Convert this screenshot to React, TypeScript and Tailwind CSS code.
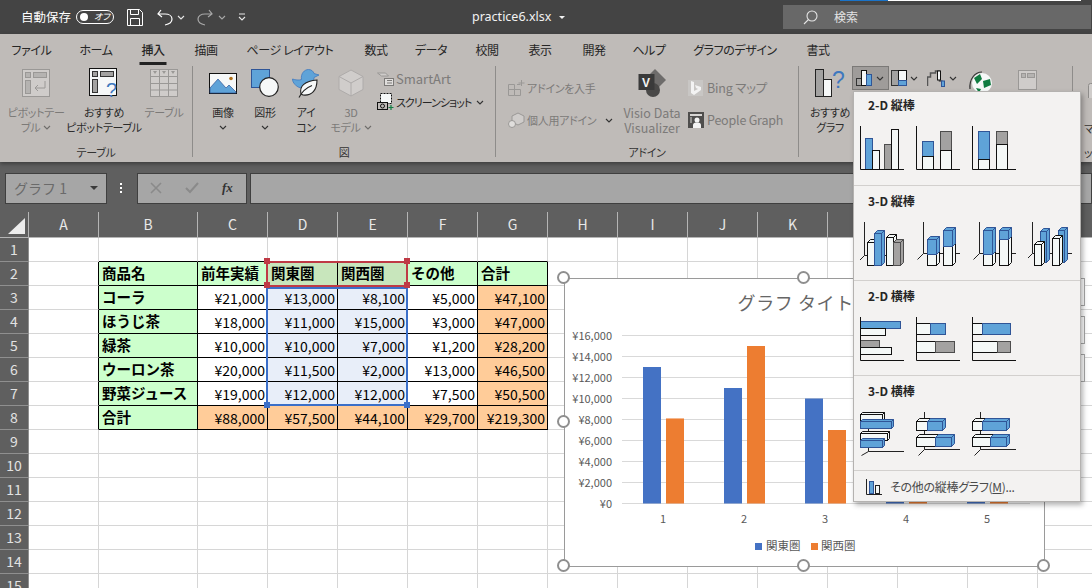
import type { ReactNode } from "react";

const palt = "[font-feature-settings:'palt']";

const columns = ["A", "B", "C", "D", "E", "F", "G", "H", "I", "J", "K", "L", "M", "N", "O"];
const rowNumbers = [1, 2, 3, 4, 5, 6, 7, 8, 9, 10, 11, 12, 13, 14, 15];

// Table contents, keyed by sheet row
const tableRows: Record<number, string[]> = {
  2: ["商品名", "前年実績", "関東圏", "関西圏", "その他", "合計"],
  3: ["コーラ", "¥21,000", "¥13,000", "¥8,100", "¥5,000", "¥47,100"],
  4: ["ほうじ茶", "¥18,000", "¥11,000", "¥15,000", "¥3,000", "¥47,000"],
  5: ["緑茶", "¥10,000", "¥10,000", "¥7,000", "¥1,200", "¥28,200"],
  6: ["ウーロン茶", "¥20,000", "¥11,500", "¥2,000", "¥13,000", "¥46,500"],
  7: ["野菜ジュース", "¥19,000", "¥12,000", "¥12,000", "¥7,500", "¥50,500"],
  8: ["合計", "¥88,000", "¥57,500", "¥44,100", "¥29,700", "¥219,300"],
};

const tabs = [
  { label: "ファイル", className: "w-[63px]" },
  { label: "ホーム", className: "w-[66px]" },
  { label: "挿入", className: "w-[48px]", active: true },
  { label: "描画", className: "w-[58px]" },
  { label: "ページ レイアウト", className: "w-[110px]" },
  { label: "数式", className: "w-[62px]" },
  { label: "データ", className: "w-[48px]" },
  { label: "校閲", className: "w-[64px]" },
  { label: "表示", className: "w-[42px]" },
  { label: "開発", className: "w-[66px]" },
  { label: "ヘルプ", className: "w-[44px]" },
  { label: "グラフのデザイン", className: "w-[128px]" },
  { label: "書式", className: "w-[38px]" },
];

const BLUE = { fill: "#5fa3d8", stroke: "#2f5597" };
const WHITE = { fill: "#f4f8f7", stroke: "#111111" };
const GRAY = { fill: "#a3a2a1", stroke: "#4d4d4d" };
type Tone = typeof BLUE;

function Chevron({ light = false }: { light?: boolean }) {
  return (
    <svg width="8" height="5" viewBox="0 0 8 5" className="shrink-0">
      <path d="M1 1l3 3 3-3" fill="none" stroke={light ? "#6f6d6b" : "#333333"} strokeWidth="1.1" />
    </svg>
  );
}

function Flat({ x, y, w, h, tone }: { x: number; y: number; w: number; h: number; tone: Tone }) {
  return <rect x={x} y={y} width={w} height={h} fill={tone.fill} stroke={tone.stroke} strokeWidth="1" />;
}

// Box with a top and a right face, as in the 3-D thumbnails
function Box({ x, y, w, h, tone, d = 3 }: { x: number; y: number; w: number; h: number; tone: Tone; d?: number }) {
  return (
    <g stroke={tone.stroke} strokeWidth="1" fill={tone.fill}>
      <path d={`M${x} ${y}l${d} ${-d}h${w}l${-d} ${d}z`} />
      <path d={`M${x + w} ${y}l${d} ${-d}v${h}l${-d} ${d}z`} />
      <rect x={x} y={y} width={w} height={h} />
    </g>
  );
}

function Thumb({ children }: { children: ReactNode }) {
  return (
    <svg width="44" height="46" viewBox="0 0 44 46" className="shrink-0">
      {children}
    </svg>
  );
}

function Axes({ x = 0.5, y = 43.5, from = 0 }: { x?: number; y?: number; from?: number }) {
  return <path d={`M${x} ${from}V${y}M${x} ${y}H44`} fill="none" stroke="#111111" strokeWidth="1" />;
}

function Axes3D({ x, y }: { x: number; y: number }) {
  return <path d={`M${x} 1V${y}H44M${x} ${y}l-6 6`} fill="none" stroke="#222222" strokeWidth="1" />;
}

function ChartSection({
  title,
  className,
  headClassName,
  children,
}: {
  title: string;
  className: string;
  headClassName: string;
  children: ReactNode;
}) {
  return (
    <div className={`border-b border-[#d2d0ce] ${className}`}>
      <div className={`flex items-center pl-[14px] text-[12px] font-bold text-[#262626] ${headClassName}`}>{title}</div>
      <div className="flex gap-[12px] pl-[6px]">{children}</div>
    </div>
  );
}

function ChartMenu() {
  return (
    <div className="absolute left-[853px] top-[91px] z-20 h-[411px] w-[228px] border border-[#b4b2b0] bg-[#f3f2f1] shadow-[2px_3px_5px_rgba(0,0,0,0.3)]">
      <ChartSection title="2-D 縦棒" className="h-[94px]" headClassName="mb-[8px] h-[26px]">
        <Thumb>
          <Flat x={5.5} y={12.5} w={7} h={31} tone={BLUE} />
          <Flat x={12.5} y={24.5} w={7} h={19} tone={WHITE} />
          <Flat x={24.5} y={18.5} w={7} h={25} tone={GRAY} />
          <Flat x={31.5} y={3.5} w={7} h={40} tone={WHITE} />
          <Axes />
        </Thumb>
        <Thumb>
          <Flat x={6.5} y={15.5} w={11} h={15} tone={BLUE} />
          <Flat x={6.5} y={30.5} w={11} h={13} tone={WHITE} />
          <Flat x={24.5} y={5.5} w={11} h={19} tone={GRAY} />
          <Flat x={24.5} y={24.5} w={11} h={19} tone={WHITE} />
          <Axes />
        </Thumb>
        <Thumb>
          <Flat x={6.5} y={5.5} w={11} h={28} tone={BLUE} />
          <Flat x={6.5} y={33.5} w={11} h={10} tone={WHITE} />
          <Flat x={24.5} y={5.5} w={11} h={13} tone={GRAY} />
          <Flat x={24.5} y={18.5} w={11} h={25} tone={WHITE} />
          <Axes />
        </Thumb>
      </ChartSection>
      <ChartSection title="3-D 縦棒" className="h-[95px]" headClassName="mb-[5px] h-[30px]">
        <Thumb>
          <Axes3D x={4.5} y={34.5} />
          <Box x={7.5} y={21.5} w={7} h={23} tone={WHITE} />
          <Box x={14.5} y={12.5} w={7} h={32} tone={BLUE} />
          <Box x={26.5} y={16.5} w={7} h={28} tone={WHITE} />
          <Box x={33.5} y={21.5} w={7} h={23} tone={GRAY} />
        </Thumb>
        <Thumb>
          <Axes3D x={7.5} y={32.5} />
          <Box x={11.5} y={33.5} w={9} h={11} tone={WHITE} />
          <Box x={11.5} y={18.5} w={9} h={15} tone={BLUE} />
          <Box x={27.5} y={25.5} w={9} h={19} tone={WHITE} />
          <Box x={27.5} y={9.5} w={9} h={16} tone={BLUE} />
        </Thumb>
        <Thumb>
          <Axes3D x={7.5} y={32.5} />
          <Box x={11.5} y={33.5} w={9} h={11} tone={WHITE} />
          <Box x={11.5} y={9.5} w={9} h={24} tone={BLUE} />
          <Box x={27.5} y={18.5} w={9} h={26} tone={WHITE} />
          <Box x={27.5} y={9.5} w={9} h={9} tone={BLUE} />
        </Thumb>
        <Thumb>
          <Axes3D x={4.5} y={32.5} />
          <Box x={12.5} y={10.5} w={6} h={31} tone={BLUE} />
          <Box x={30.5} y={9.5} w={6} h={32} tone={BLUE} />
          <Box x={6.5} y={23.5} w={7} h={21} tone={WHITE} />
          <Box x={24.5} y={17.5} w={7} h={27} tone={WHITE} />
        </Thumb>
      </ChartSection>
      <ChartSection title="2-D 横棒" className="h-[95px]" headClassName="mb-[6px] h-[30px]">
        <Thumb>
          <Flat x={0.5} y={4.5} w={40} h={7} tone={BLUE} />
          <Flat x={0.5} y={11.5} w={25} h={7} tone={WHITE} />
          <Flat x={0.5} y={23.5} w={19} h={7} tone={GRAY} />
          <Flat x={0.5} y={30.5} w={31} h={7} tone={WHITE} />
          <Axes />
        </Thumb>
        <Thumb>
          <Flat x={0.5} y={6.5} w={14} h={11} tone={WHITE} />
          <Flat x={14.5} y={6.5} w={15} h={11} tone={BLUE} />
          <Flat x={0.5} y={24.5} w={19} h={11} tone={WHITE} />
          <Flat x={19.5} y={24.5} w={19} h={11} tone={GRAY} />
          <Axes />
        </Thumb>
        <Thumb>
          <Flat x={0.5} y={6.5} w={10} h={11} tone={WHITE} />
          <Flat x={10.5} y={6.5} w={28} h={11} tone={BLUE} />
          <Flat x={0.5} y={24.5} w={25} h={11} tone={WHITE} />
          <Flat x={25.5} y={24.5} w={13} h={11} tone={GRAY} />
          <Axes />
        </Thumb>
      </ChartSection>
      <ChartSection title="3-D 横棒" className="h-[95px]" headClassName="mb-[6px] h-[30px]">
        <Thumb>
          <path d="M8.5 0V39.5H44M8.5 39.5l-7 4" fill="none" stroke="#222222" strokeWidth="1" />
          <Box x={0.5} y={2.5} w={22} h={7} tone={WHITE} d={2} />
          <Box x={0.5} y={9.5} w={31} h={7} tone={BLUE} d={2} />
          <Box x={0.5} y={21.5} w={27} h={7} tone={WHITE} d={2} />
          <Box x={0.5} y={28.5} w={22} h={7} tone={BLUE} d={2} />
        </Thumb>
        <Thumb>
          <path d="M8.5 0V37.5H44M8.5 37.5l-6 6" fill="none" stroke="#222222" strokeWidth="1" />
          <Box x={0.5} y={9.5} w={11} h={9} tone={WHITE} />
          <Box x={11.5} y={9.5} w={15} h={9} tone={BLUE} />
          <Box x={0.5} y={25.5} w={19} h={9} tone={WHITE} />
          <Box x={19.5} y={25.5} w={16} h={9} tone={BLUE} />
        </Thumb>
        <Thumb>
          <path d="M8.5 0V37.5H44M8.5 37.5l-6 6" fill="none" stroke="#222222" strokeWidth="1" />
          <Box x={0.5} y={9.5} w={10} h={9} tone={WHITE} />
          <Box x={10.5} y={9.5} w={24} h={9} tone={BLUE} />
          <Box x={0.5} y={25.5} w={18} h={9} tone={WHITE} />
          <Box x={18.5} y={25.5} w={16} h={9} tone={BLUE} />
        </Thumb>
      </ChartSection>
      <div className="flex h-[31px] items-center pl-[12px]">
        <svg width="16" height="16" viewBox="0 0 16 16">
          <rect x="3.5" y="2.5" width="4" height="12" fill="#5fa3d8" stroke="#2f5597" />
          <rect x="9.5" y="6.5" width="4" height="8" fill="#f4f8f7" stroke="#222222" />
          <path d="M0.5 0V15.5H16" fill="none" stroke="#222222" />
        </svg>
        <span className={`ml-[8px] text-[12px] tracking-[-0.3px] text-[#4a4a4a] ${palt}`}>
          その他の縦棒グラフ(<span className="underline">M</span>)...
        </span>
      </div>
    </div>
  );
}

function ChartPanel() {
  const ticks = ["¥16,000", "¥14,000", "¥12,000", "¥10,000", "¥8,000", "¥6,000", "¥4,000", "¥2,000", "¥0"];
  const east = [13000, 11000, 10000, 11500, 12000];
  const west = [8100, 15000, 7000, 2000, 12000];
  const zeroY = 224.5;
  const perUnit = 168 / 16000;
  return (
    <div className="absolute left-[564px] top-[278px] h-[289px] w-[481px] border-[1.5px] border-[#9a9a9a] bg-white">
      <svg width="478" height="286" viewBox="0 0 478 286" className="block">
        <text x="240" y="31" textAnchor="middle" fontSize="18" fill="#666666" letterSpacing="0.6">
          グラフ タイトル
        </text>
        {ticks.map((tick, i) => (
          <g key={tick}>
            <line x1="57" x2="465" y1={56.5 + i * 21} y2={56.5 + i * 21} stroke="#d9d9d9" strokeWidth="1" />
            <text x="47" y={60.5 + i * 21} textAnchor="end" fontSize="11" fill="#595959">
              {tick}
            </text>
          </g>
        ))}
        {east.map((value, i) => (
          <g key={i}>
            <rect x={78 + i * 81} y={zeroY - value * perUnit} width="18" height={value * perUnit} fill="#4472c4" />
            <rect x={101 + i * 81} y={zeroY - west[i] * perUnit} width="18" height={west[i] * perUnit} fill="#ed7d31" />
            <text x={98 + i * 81} y="244" textAnchor="middle" fontSize="11" fill="#595959">
              {i + 1}
            </text>
          </g>
        ))}
        <rect x="190" y="264" width="7" height="7" fill="#4472c4" />
        <text x="201" y="271" fontSize="11.5" fill="#595959">
          関東圏
        </text>
        <rect x="246" y="264" width="7" height="7" fill="#ed7d31" />
        <text x="256" y="271" fontSize="11.5" fill="#595959">
          関西圏
        </text>
      </svg>
      <Handle className="left-[-8px] top-[-8px]" />
      <Handle className="left-[232px] top-[-8px]" />
      <Handle className="left-[472px] top-[-8px]" />
      <Handle className="left-[-8px] top-[136px]" />
      <Handle className="left-[472px] top-[136px]" />
      <Handle className="left-[-8px] top-[280px]" />
      <Handle className="left-[232px] top-[280px]" />
      <Handle className="left-[472px] top-[280px]" />
    </div>
  );
}

function Handle({ className }: { className: string }) {
  return <div className={`absolute h-[13px] w-[13px] rounded-full border-2 border-[#8f8f8f] bg-white ${className}`} />;
}

function SideButtons() {
  return (
    <>
      <div className="absolute left-[1050px] top-[278px] h-[28px] w-[35px] border border-[#a8a8a8] bg-white" />
      <div className="absolute left-[1050px] top-[316px] h-[28px] w-[35px] border border-[#a8a8a8] bg-white" />
      <div className="absolute left-[1050px] top-[354px] h-[28px] w-[35px] border border-[#a8a8a8] bg-white" />
    </>
  );
}

function Selection() {
  return (
    <>
      <div className="absolute left-[266px] top-[287px] h-[119px] w-[142px] border-2 border-[#3b6fc9]" />
      <div className="absolute left-[266px] top-[261px] h-[26px] w-[142px] border-2 border-[#bf3a45]" />
      <div className="absolute left-[264px] top-[258px] h-[6px] w-[6px] bg-[#bf3a45]" />
      <div className="absolute left-[404px] top-[258px] h-[6px] w-[6px] bg-[#bf3a45]" />
      <div className="absolute left-[264px] top-[282px] h-[6px] w-[6px] bg-[#bf3a45]" />
      <div className="absolute left-[404px] top-[282px] h-[6px] w-[6px] bg-[#bf3a45]" />
      <div className="absolute left-[264px] top-[402px] h-[6px] w-[6px] bg-[#3b6fc9]" />
      <div className="absolute left-[404px] top-[402px] h-[6px] w-[6px] bg-[#3b6fc9]" />
    </>
  );
}

function cellClass(row: number, col: number) {
  const inTable = row >= 2 && row <= 8 && col >= 1 && col <= 6;
  const black = inTable ? "border-r-black border-b-black" : "";
  const leftOfTable = col === 0 && row >= 2 && row <= 8 ? "border-r-black" : "";
  const aboveTable = row === 1 && col >= 1 && col <= 6 ? "border-b-black" : "";
  let fill = "bg-white";
  if (inTable) {
    if (col === 1 || row === 2) fill = "bg-[#ccffcc]";
    if (row === 8 && col > 1) fill = "bg-[#ffcc99]";
    if (col === 6 && row > 2) fill = "bg-[#ffcc99]";
    if (row === 2 && (col === 3 || col === 4)) fill = "bg-[#c8e6bc]";
    if (row > 2 && row < 8 && (col === 3 || col === 4)) fill = "bg-[#e8eef9]";
  }
  return `${black} ${leftOfTable} ${aboveTable} ${fill}`;
}

function Sheet() {
  return (
    <div className="grid grid-cols-[29px_70px_99px_70px_70px_70px_70px_70px_70px_70px_70px_70px_70px_70px_70px_70px] grid-rows-[26px_repeat(15,24px)]">
      <div className="flex items-end justify-end border-r border-b border-[#b5b5b5] bg-[#5f5f5f] pb-[3px] pr-[3px]">
        <div className="h-0 w-0 border-b-[16px] border-l-[17px] border-b-[#ededed] border-l-transparent" />
      </div>
      {columns.map((col) => (
        <div key={col} className="flex items-center justify-center border-r border-b border-[#b5b5b5] bg-[#5f5f5f] text-[14px] text-[#e8e8e8]">
          {col}
        </div>
      ))}
      {rowNumbers.map((row) => (
        <SheetRow key={row} row={row} />
      ))}
    </div>
  );
}

function SheetRow({ row }: { row: number }) {
  const values = tableRows[row];
  return (
    <>
      <div className="flex items-center justify-center border-r border-b border-[#8f8f8f] bg-[#5f5f5f] text-[14px] text-[#e2e2e2]">
        {row}
      </div>
      {columns.map((_, col) => {
        const value = values && col >= 1 && col <= 6 ? values[col - 1] : "";
        const heading = col === 1 || row === 2;
        return (
          <div
            key={col}
            className={`flex items-center overflow-hidden whitespace-nowrap border-r border-b border-[#d6d6d6] leading-none text-black ${cellClass(row, col)} ${
              heading ? "justify-start pl-[3px] text-[14.5px] font-bold" : "justify-end pr-[2px] text-[14px]"
            }`}
          >
            {value}
          </div>
        );
      })}
    </>
  );
}

function Group({ label, className, children }: { label: string; className: string; children: ReactNode }) {
  return (
    <div className={`flex h-[91px] shrink-0 flex-col ${className}`}>
      <div className="flex h-[81px] shrink-0">{children}</div>
      <div className={`text-center text-[11px] leading-[10px] tracking-[-0.3px] text-[#333333] ${palt}`}>{label}</div>
    </div>
  );
}

function BigButton({
  icon,
  lines,
  className,
  disabled = false,
}: {
  icon: ReactNode;
  lines: ReactNode[];
  className: string;
  disabled?: boolean;
}) {
  return (
    <div
      className={`flex shrink-0 flex-col items-center whitespace-nowrap leading-[15px] ${palt} ${className} ${
        disabled ? "text-[#7c7a78]" : "text-[#2b2b2b]"
      }`}
    >
      <div className="flex h-[34px] items-center">{icon}</div>
      <div className="h-[5px]" />
      {lines.map((line, i) => (
        <div key={i} className="flex h-[15px] items-center gap-[3px]">
          {line}
        </div>
      ))}
    </div>
  );
}

function SmallButton({ icon, label, className, chevron }: { icon: ReactNode; label: string; className: string; chevron?: string }) {
  return (
    <div className={`flex items-center whitespace-nowrap ${palt} ${className}`}>
      <div className="flex w-[19px] shrink-0 items-center">{icon}</div>
      <span>{label}</span>
      {chevron && <span className={`flex ${chevron}`}><Chevron /></span>}
    </div>
  );
}

function Ribbon() {
  const off = "#9a9896";
  const kana = "text-[11px] tracking-[-0.3px]";
  return (
    <div className="relative z-10 h-[128px] bg-[#bfbbb8] shadow-[0_2px_4px_rgba(0,0,0,0.35)]">
      <div className="flex h-[32px] items-center text-[12px] tracking-[-0.4px] text-[#262626]">
        {tabs.map((tab) => (
          <div key={tab.label} className={`relative flex h-full shrink-0 items-center justify-center whitespace-nowrap ${palt} ${tab.className} ${tab.active ? "font-medium" : ""}`}>
            {tab.label}
            {tab.active && <div className="absolute bottom-[1px] left-1/2 h-[3px] w-[27px] -translate-x-1/2 bg-[#222222]" />}
          </div>
        ))}
      </div>
      <div className="flex">
        <Group label="テーブル" className="w-[193px] border-r border-[#8e8c8a]">
          <BigButton
            className={`w-[72px] ${kana}`}
            disabled
            icon={
              <svg width="28" height="28" viewBox="0 0 28 28">
                <rect x="0.5" y="0.5" width="27" height="27" fill="#cfccca" stroke={off} />
                <rect x="3.5" y="3.5" width="5" height="5" fill="#b5b3b1" stroke={off} />
                <rect x="11.5" y="3.5" width="13" height="5" fill="#b5b3b1" stroke={off} />
                <rect x="3.5" y="11.5" width="5" height="13" fill="#b5b3b1" stroke={off} />
                <path d="M23 12v7h-10M16 16l-3 3 3 3" fill="none" stroke={off} />
              </svg>
            }
            lines={["ピボットテー", <>ブル <Chevron light /></>]}
          />
          <BigButton
            className={`w-[64px] ${kana}`}
            icon={
              <svg width="30" height="30" viewBox="0 0 30 30">
                <rect x="0.5" y="0.5" width="27" height="27" fill="#f6f8f8" stroke="#111111" />
                <rect x="3.5" y="3.5" width="5" height="5" fill="#a3a2a1" stroke="#333333" />
                <rect x="11.5" y="3.5" width="13" height="5" fill="#a3a2a1" stroke="#333333" />
                <rect x="3.5" y="11.5" width="5" height="13" fill="#a3a2a1" stroke="#333333" />
                <text x="17" y="29" fontSize="20" fill="#3f78bf" fontFamily="Liberation Sans">?</text>
              </svg>
            }
            lines={["おすすめ", "ピボットテーブル"]}
          />
          <BigButton
            className={`w-[56px] ${kana}`}
            disabled
            icon={
              <svg width="28" height="28" viewBox="0 0 28 28">
                <rect x="0.5" y="0.5" width="27" height="27" fill="#cfccca" stroke={off} />
                <path d="M0.5 7.5H27.5M0.5 14.5H27.5M0.5 21H27.5M9.5 0.5V27.5M18.5 0.5V27.5" stroke={off} fill="none" />
                <path d="M3 2h4l-2 3zM12 2h4l-2 3zM21 2h4l-2 3z" fill={off} />
              </svg>
            }
            lines={["テーブル"]}
          />
        </Group>
        <Group label="図" className="w-[303px] border-r border-[#8e8c8a]">
          <BigButton
            className={`ml-[8px] w-[44px] ${kana}`}
            icon={
              <svg width="28" height="21" viewBox="0 0 28 21">
                <rect x="0.5" y="0.5" width="27" height="20" fill="#f6f8f8" stroke="#111111" />
                <path d="M1 20V15l8-9 8 9 3-3 7 7v1z" fill="#5fa3d8" stroke="#2f5597" strokeWidth="0.7" />
                <circle cx="22" cy="5.5" r="1.8" fill="#b0701a" />
              </svg>
            }
            lines={["画像", <Chevron key="c" />]}
          />
          <BigButton
            className={`w-[40px] ${kana}`}
            icon={
              <svg width="28" height="28" viewBox="0 0 28 28">
                <rect x="0.5" y="0.5" width="18" height="18" fill="#5fa3d8" stroke="#2f5597" />
                <circle cx="18" cy="18" r="9.3" fill="#f6f8f8" stroke="#222222" strokeWidth="1.2" />
              </svg>
            }
            lines={["図形", <Chevron key="c" />]}
          />
          <BigButton
            className={`w-[42px] ${kana}`}
            icon={
              <svg width="28" height="30" viewBox="0 0 28 30">
                <path d="M0.5 11c3 1 6 1.500 9 0.500-1-6 3-10 7-10 3 0 5 2 5.500 4l5 1.500-5 2.500c0 3-1 7-4 9-4 3-12 2-15-2-2-2-2.500-4-2.500-5.500z" fill="#5fa3d8" stroke="#3f78bf" strokeWidth="0.8" />
                <path d="M9 26c-2-8 4-13 16-14 0 10-5 16-14 15z" fill="#f6f8f8" stroke="#222222" strokeWidth="1.1" />
                <path d="M7 29.500c3-6 8-10 13-12" fill="none" stroke="#222222" strokeWidth="1.1" />
              </svg>
            }
            lines={["アイ", "コン"]}
          />
          <BigButton
            className={`w-[48px] ${kana}`}
            disabled
            icon={
              <svg width="26" height="28" viewBox="0 0 26 28">
                <path d="M13 1l12 6.500v13L13 27 1 20.500v-13z" fill="#d0cdcb" stroke="#aeabaa" />
                <path d="M1 7.500L13 14l12-6.500M13 14v13" fill="none" stroke="#aeabaa" />
              </svg>
            }
            lines={["3D", <>モデル <Chevron light /></>]}
          />
          <div className="ml-[2px] flex flex-col pt-[4px]">
            <SmallButton
              className="h-[18px] text-[13px] text-[#7c7a78]"
              icon={
                <svg width="17" height="14" viewBox="0 0 17 14">
                  <path d="M0.500 1h8l3 3H4.500z" fill="#cfccca" stroke={off} />
                  <rect x="7.500" y="6.500" width="9" height="7" fill="#e0dedc" stroke="#7c7a78" />
                  <path d="M10 8.500h5M10 11h5" stroke="#7c7a78" />
                </svg>
              }
              label="SmartArt"
            />
            <SmallButton
              className="mt-[5px] h-[18px] text-[11px] tracking-[-1px] text-[#262626]"
              icon={
                <svg width="17" height="18" viewBox="0 0 17 18">
                  <rect x="3.500" y="0.500" width="11" height="10" fill="#f6f8f8" stroke="#111111" strokeDasharray="2 1" />
                  <rect x="0.500" y="9.500" width="10" height="7" fill="#bfbbb8" stroke="#111111" />
                  <circle cx="5.500" cy="13" r="2" fill="none" stroke="#111111" />
                  <path d="M14 12v5M11.500 14.500h5" stroke="#107c41" strokeWidth="1.200" />
                </svg>
              }
              label="スクリーンショット"
              chevron="ml-[5px]"
            />
          </div>
        </Group>
        <Group label="アドイン" className="w-[303px] border-r border-[#8e8c8a]">
          <div className={`ml-[12px] flex w-[110px] shrink-0 flex-col pt-[13px] text-[#7c7a78] ${kana}`}>
            <SmallButton
              className="h-[18px]"
              icon={
                <svg width="17" height="16" viewBox="0 0 17 16">
                  <path d="M0.500 4.500h6v5h-6zM0.500 9.500h6v6h-6zM6.500 9.500h6v6h-6zM9 4.500h3.500" fill="none" stroke={off} />
                  <path d="M13.500 0v6M10.500 3h6" stroke={off} />
                </svg>
              }
              label="アドインを入手"
            />
            <div className="mt-[14px] flex h-[18px] items-center">
              <SmallButton
                className="h-[18px]"
                icon={
                  <svg width="17" height="16" viewBox="0 0 17 16">
                    <path d="M10 1l6 3v6l-6 3-6-3V4z" fill="#cfccca" stroke={off} />
                    <circle cx="4" cy="12" r="3.500" fill="#e0dedc" stroke={off} />
                  </svg>
                }
                label="個人用アドイン"
              />
              <span className="ml-[9px] flex"><Chevron /></span>
            </div>
          </div>
          <BigButton
            className="w-[68px] text-[12.5px]"
            disabled
            icon={
              <svg width="29" height="28" viewBox="0 0 29 28">
                <path d="M17 0l11 11-11 11-5-5V5z" fill="#6e6c6b" />
                <circle cx="15" cy="21" r="7" fill="#4a4948" />
                <rect x="0.500" y="5" width="16" height="16" fill="#3a3a3a" />
                <text x="4" y="18" fontSize="12" fontWeight="bold" fill="#f3f3f3" fontFamily="Liberation Sans">V</text>
              </svg>
            }
            lines={["Visio Data", "Visualizer"]}
          />
          <div className="ml-[2px] flex flex-col pt-[13px] text-[12.5px] text-[#7c7a78]">
            <SmallButton
              className="h-[18px] tracking-[-0.2px]"
              icon={
                <svg width="15" height="16" viewBox="0 0 15 16">
                  <rect width="15" height="16" fill="#c8c6c4" />
                  <path d="M3 1l3 1v9l4-2-2-1-1-3 6 2v3l-7 5-3-2z" fill="#f3f3f3" />
                </svg>
              }
              label="Bing マップ"
            />
            <SmallButton
              className="mt-[14px] h-[18px] tracking-[-0.2px]"
              icon={
                <svg width="16" height="16" viewBox="0 0 16 16">
                  <rect width="16" height="16" fill="#4f4e4d" />
                  <rect x="2" y="2" width="12" height="2" fill="#d8d6d4" />
                  <circle cx="9" cy="8" r="2.500" fill="#f3f3f3" />
                  <path d="M5 16v-3c0-2 2-2.500 4-2.500s4 .5 4 2.500v3z" fill="#f3f3f3" />
                  <path d="M2 6h2M2 8h2M2 10h2" stroke="#d8d6d4" />
                </svg>
              }
              label="People Graph"
            />
          </div>
        </Group>
        <Group label="" className="w-[274px] border-r border-[#8e8c8a]">
          <BigButton
            className={`ml-[9px] w-[44px] ${kana}`}
            icon={
              <svg width="30" height="28" viewBox="0 0 30 28">
                <rect x="0.500" y="0.500" width="8" height="27" fill="#a3a2a1" stroke="#222222" />
                <rect x="8.500" y="10.500" width="8" height="17" fill="#f6f8f8" stroke="#222222" />
                <text x="17" y="19" fontSize="23" fill="#3f78bf" fontFamily="Liberation Sans">?</text>
              </svg>
            }
            lines={["おすすめ", "グラフ"]}
          />
          <div className="flex h-[24px] items-start">
            <div className="flex h-[24px] w-[37px] items-center gap-[3px] border border-[#7b7977] bg-[#9f9c9a] pl-[3px]">
              <svg width="17" height="16" viewBox="0 0 17 16">
                <rect x="0.500" y="8.500" width="5" height="7" fill="#a3a2a1" stroke="#333333" />
                <rect x="5.500" y="0.500" width="5" height="15" fill="#f6f8f8" stroke="#111111" />
                <rect x="10.500" y="4.500" width="5" height="11" fill="#5fa3d8" stroke="#2f5597" />
              </svg>
              <Chevron />
            </div>
            <div className="ml-[2px] flex h-[24px] w-[36px] items-center gap-[3px]">
              <svg width="16" height="16" viewBox="0 0 16 16">
                <rect x="0.500" y="0.500" width="7" height="15" fill="#a3a2a1" stroke="#333333" />
                <rect x="7.500" y="0.500" width="8" height="10" fill="#f6f8f8" stroke="#111111" />
                <rect x="7.500" y="10.500" width="8" height="5" fill="#5fa3d8" stroke="#2f5597" />
              </svg>
              <Chevron />
            </div>
            <div className="flex h-[24px] w-[42px] items-center gap-[3px]">
              <svg width="19" height="17" viewBox="0 0 19 17">
                <path d="M0.500 16V7h3V3h5V1h4v10h3" fill="none" stroke="#555555" strokeWidth="1.500" />
                <rect x="10.500" y="1" width="3" height="9" fill="#f6f8f8" stroke="#111111" />
                <rect x="14.500" y="11" width="3" height="5.500" fill="#5fa3d8" stroke="#2f5597" />
              </svg>
              <Chevron />
            </div>
            <svg width="26" height="24" viewBox="0 0 26 24" className="ml-[-1px] mt-[4px] shrink-0">
              <path d="M2 19C1 9 7 2 14 2" fill="none" stroke="#333333" strokeWidth="1.200" />
              <circle cx="14" cy="13" r="10" fill="#f6f8f8" />
              <path d="M6 8l6-4 2 5-5 5zM15 11l7-2 1 6-7 3zM8 18l5 1-2 4z" fill="#107c41" />
            </svg>
            <svg width="19" height="20" viewBox="0 0 19 20" className="ml-[24px] mt-[4px] shrink-0">
              <rect x="0.500" y="0.500" width="18" height="19" fill="#cfccca" stroke={off} />
              <rect x="3.500" y="3.500" width="4" height="4" fill="#b5b3b1" stroke={off} />
              <rect x="9.500" y="3.500" width="7" height="4" fill="#b5b3b1" stroke={off} />
            </svg>
          </div>
        </Group>
        <div className={`flex h-[91px] flex-col pl-[11px] pt-[17px] text-[11px] leading-[24px] text-[#333333] ${palt}`}>
          <svg width="20" height="15" viewBox="0 0 20 15" className="ml-[4px] shrink-0">
            <rect x="0.500" y="0.500" width="18" height="21" rx="2" fill="#cfccca" stroke="#8e8c8a" />
          </svg>
          <span className="mt-[18px]">マ</span>
          <span>ッ</span>
        </div>
      </div>
    </div>
  );
}

function TitleBar() {
  return (
    <div className="relative flex h-[34px] items-center bg-[#444444] pl-[21px] text-white">
      <div className="absolute left-[840px] top-0 h-[1px] w-[48px] bg-[#1a73c8]" />
      <div className="absolute left-[888px] top-0 h-[1px] w-[193px] bg-white" />
      <span className={`w-[55px] shrink-0 text-[12.5px] ${palt}`}>自動保存</span>
      <div className="flex h-[14px] w-[38px] shrink-0 items-center rounded-full border border-white pl-[3px]">
        <div className="h-[8px] w-[8px] rounded-full bg-white" />
        <span className={`ml-[6px] text-[9px] italic ${palt}`}>オフ</span>
      </div>
      <svg width="16" height="17" viewBox="0 0 16 17" className="ml-[13px] shrink-0">
        <path d="M0.500 0.500h12l3 3v13H0.500z" fill="none" stroke="white" />
        <path d="M3.500 0.500v5h8v-5M3.500 16.500v-7h9v7" fill="none" stroke="white" />
      </svg>
      <svg width="16" height="17" viewBox="0 0 16 17" className="ml-[14px] shrink-0">
        <path d="M4 1L1 5l4 3M1.500 5H8c4 0 7 2 7 5 0 3-2 5-7 6" fill="none" stroke="white" strokeWidth="1.200" />
      </svg>
      <svg width="8" height="5" viewBox="0 0 8 5" className="ml-[4px] shrink-0">
        <path d="M1 1l3 3 3-3" fill="none" stroke="#e8e8e8" strokeWidth="1.100" />
      </svg>
      <svg width="16" height="17" viewBox="0 0 16 17" className="ml-[12px] shrink-0">
        <path d="M12 1l3 4-4 3M14.500 5H8C4 5 1 7 1 10c0 3 2 5 7 6" fill="none" stroke="#a8a8a8" strokeWidth="1.200" />
      </svg>
      <svg width="8" height="5" viewBox="0 0 8 5" className="ml-[5px] shrink-0">
        <path d="M1 1l3 3 3-3" fill="none" stroke="#a8a8a8" strokeWidth="1.100" />
      </svg>
      <svg width="8" height="8" viewBox="0 0 8 8" className="ml-[12px] shrink-0">
        <path d="M1 1h6M1 4l3 3 3-3" fill="none" stroke="#e8e8e8" strokeWidth="1.100" />
      </svg>
      <span className="ml-[226px] w-[82px] shrink-0 font-['Noto_Sans',sans-serif] text-[12.5px] text-[#f2f2f2]">practice6.xlsx</span>
      <div className="ml-[5px] h-0 w-0 shrink-0 border-x-[3px] border-t-[3px] border-x-transparent border-t-[#f2f2f2]" />
      <div className="ml-[218px] flex h-[24px] w-[308px] shrink-0 items-center bg-[#686868] pl-[20px] text-[12px] text-[#e4e4e4]">
        <svg width="15" height="15" viewBox="0 0 15 15">
          <circle cx="9" cy="6" r="5" fill="none" stroke="#e4e4e4" strokeWidth="1.100" />
          <path d="M5.500 9.500L1 14" stroke="#e4e4e4" strokeWidth="1.100" />
        </svg>
        <span className="ml-[16px]">検索</span>
      </div>
    </div>
  );
}

function FormulaBar() {
  return (
    <div className="flex h-[50px] items-center bg-[#5f5f5f] pl-[5px] pt-[2px]">
      <div className="flex h-[31px] w-[102px] shrink-0 items-center justify-between border border-[#3f3f3f] bg-[#a6a6a6] pl-[8px] pr-[8px] text-[14px] text-[#6a6a6a]">
        <span>グラフ 1</span>
        <div className="h-0 w-0 border-x-[4px] border-t-[4px] border-x-transparent border-t-[#3a3a3a]" />
      </div>
      <div className="ml-[13px] flex w-[4px] shrink-0 flex-col gap-[2px]">
        <div className="h-[2px] w-[2px] bg-white" />
        <div className="h-[2px] w-[2px] bg-white" />
        <div className="h-[2px] w-[2px] bg-white" />
      </div>
      <div className="ml-[13px] flex h-[31px] w-[110px] shrink-0 items-center border border-[#3f3f3f] bg-[#a6a6a6] pl-[12px] text-[#8a8a8a]">
        <svg width="12" height="12" viewBox="0 0 12 12">
          <path d="M1 1l10 10M11 1L1 11" stroke="#8a8a8a" strokeWidth="1.600" />
        </svg>
        <svg width="14" height="12" viewBox="0 0 14 12" className="ml-[23px]">
          <path d="M1 6l4 4 8-9" fill="none" stroke="#8a8a8a" strokeWidth="2" />
        </svg>
        <span className="ml-[23px] font-['Liberation_Serif',serif] text-[13px] font-bold italic text-[#333333]">fx</span>
      </div>
      <div className="ml-[3px] h-[31px] flex-1 border border-[#3f3f3f] bg-[#a6a6a6]" />
    </div>
  );
}

export default function App() {
  return (
    <div className="relative h-[588px] w-[1092px] overflow-hidden bg-white font-['Noto_Sans_CJK_JP','Noto_Sans',sans-serif]">
      <TitleBar />
      <Ribbon />
      <FormulaBar />
      <Sheet />
      <Selection />
      <SideButtons />
      <ChartPanel />
      <ChartMenu />
    </div>
  );
}
